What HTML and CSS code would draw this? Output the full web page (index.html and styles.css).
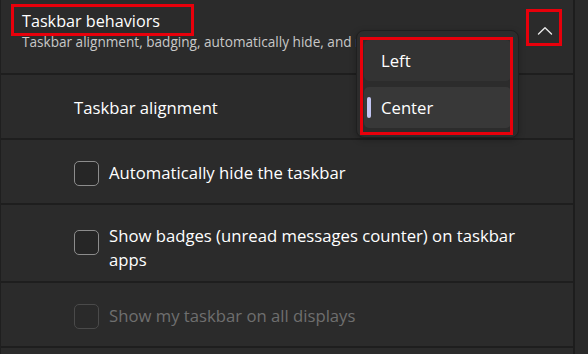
FILE: index.html
```html
<!DOCTYPE html>
<html lang="en">
<head>
<meta charset="utf-8">
<title>Taskbar behaviors</title>
<link rel="stylesheet" href="styles.css">
</head>
<body>
<div class="window">
  <div class="panel">
    <div class="row header">
      <div class="title">Taskbar behaviors</div>
      <div class="subtitle">Taskbar alignment, badging, automatically hide, and multiple displays</div>
      <button class="chevron" aria-label="Collapse">
        <svg width="16" height="10" viewBox="0 0 16 10"><path d="M1.5 8 L8 1.8 L14.5 8" fill="none" stroke="#e8e8e8" stroke-width="1.4" stroke-linecap="round" stroke-linejoin="round"/></svg>
      </button>
    </div>
    <div class="row setting">
      <span class="label">Taskbar alignment</span>
    </div>
    <div class="row setting">
      <span class="box"></span>
      <span class="label">Automatically hide the taskbar</span>
    </div>
    <div class="row setting tall">
      <span class="box"></span>
      <span class="label wrap">Show badges (unread messages counter) on taskbar apps</span>
    </div>
    <div class="row setting disabled">
      <span class="box"></span>
      <span class="label">Show my taskbar on all displays</span>
    </div>
    <div class="row rest"></div>
  </div>
  <div class="rail"></div>

  <div class="popup">
    <div class="item">Left</div>
    <div class="item selected"><span class="pill"></span>Center</div>
  </div>

  <div class="mark mark-title"></div>
  <div class="mark mark-chevron"></div>
  <div class="mark mark-popup"></div>
</div>
</body>
</html>
```
FILE: styles.css
```css
* { box-sizing: border-box; }
html, body { margin: 0; padding: 0; }
body {
  background: #2a2a2a;
  font-family: "Open Sans", "Noto Sans", sans-serif;
  color: #ffffff;
  width: 588px;
  height: 354px;
  overflow: hidden;
}
.window {
  position: relative;
  display: flex;
  height: 354px;
}
.panel {
  width: 575px;
  display: flex;
  flex-direction: column;
  gap: 2px;
  background: #1e1e1e;
  border-left: 1px solid #1f1f1f;
  border-right: 2px solid #1d1d1d;
}
.rail {
  flex: 1;
  background: #2a2a2a;
}
.row {
  background: #2b2b2b;
  display: flex;
  align-items: center;
}
.header {
  position: relative;
  height: 73px;
  flex-direction: column;
  align-items: flex-start;
  padding: 9px 0 0 21px;
}
.title {
  font-size: 16.2px;
  line-height: 24px;
}
.subtitle {
  font-size: 13.6px;
  line-height: 17px;
  color: #c8c8c8;
  white-space: nowrap;
}
.chevron {
  position: absolute;
  top: 24px;
  right: 18px;
  width: 20px;
  height: 14px;
  padding: 0;
  border: 0;
  background: none;
  display: flex;
  align-items: center;
  justify-content: center;
}
.setting {
  height: 63px;
  padding-left: 73px;
  padding-top: 3px;
  gap: 10px;
  font-size: 16.7px;
}
.setting.tall { height: 76px; align-items: flex-start; padding-top: 19px; }
.label { line-height: 24px; }
.wrap { width: 416px; }
.box {
  width: 25px;
  height: 25px;
  border: 1.5px solid #8c8c8c;
  border-radius: 5px;
  background: #262626;
  flex: none;
}
.tall .box { margin-top: 6px; }
.disabled .label { color: #6f6f6f; }
.disabled .box { border-color: #4a4a4a; background: #2a2a2a; }
.rest { flex: 1; }

.popup {
  position: absolute;
  left: 356px;
  top: 30px;
  width: 163px;
  height: 108px;
  background: #2c2c2c;
  border: 1px solid #1f1f1f;
  border-radius: 8px;
  padding: 9px 7px 8px 7px;
  display: flex;
  flex-direction: column;
  gap: 6px;
  box-shadow: 0 2px 6px rgba(0,0,0,0.25);
}
.item {
  position: relative;
  height: 41px;
  background: #333333;
  border-radius: 5px;
  padding-left: 17px;
  display: flex;
  align-items: center;
  font-size: 16.7px;
}
.item.selected { background: #383838; }
.pill {
  position: absolute;
  left: 3px;
  top: 10px;
  width: 4px;
  height: 21px;
  border-radius: 2px;
  background: #c2c5f2;
}

.mark {
  position: absolute;
  border: 3px solid #e8000b;
}
.mark-title { left: 11px; top: 4px; width: 183px; height: 32px; }
.mark-chevron { left: 526px; top: 9px; width: 36px; height: 37px; }
.mark-popup { left: 360px; top: 37px; width: 153px; height: 98px; }
```
